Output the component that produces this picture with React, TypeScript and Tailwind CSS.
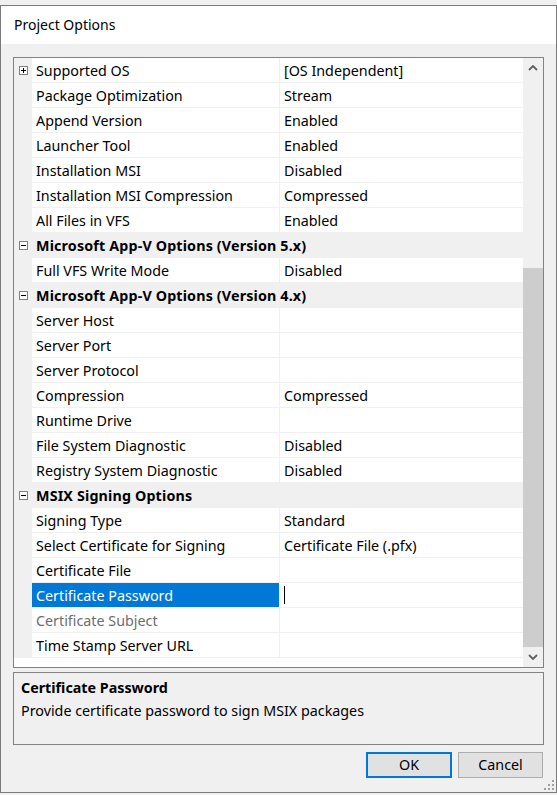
import React from "react";

type Row =
  | { kind: "cat"; label: string }
  | {
      kind: "prop";
      name: string;
      value?: string;
      expandable?: boolean;
      selected?: boolean;
      disabled?: boolean;
    };

const ROWS: Row[] = [
  { kind: "prop", name: "Supported OS", value: "[OS Independent]", expandable: true },
  { kind: "prop", name: "Package Optimization", value: "Stream" },
  { kind: "prop", name: "Append Version", value: "Enabled" },
  { kind: "prop", name: "Launcher Tool", value: "Enabled" },
  { kind: "prop", name: "Installation MSI", value: "Disabled" },
  { kind: "prop", name: "Installation MSI Compression", value: "Compressed" },
  { kind: "prop", name: "All Files in VFS", value: "Enabled" },
  { kind: "cat", label: "Microsoft App-V Options (Version 5.x)" },
  { kind: "prop", name: "Full VFS Write Mode", value: "Disabled" },
  { kind: "cat", label: "Microsoft App-V Options (Version 4.x)" },
  { kind: "prop", name: "Server Host" },
  { kind: "prop", name: "Server Port" },
  { kind: "prop", name: "Server Protocol" },
  { kind: "prop", name: "Compression", value: "Compressed" },
  { kind: "prop", name: "Runtime Drive" },
  { kind: "prop", name: "File System Diagnostic", value: "Disabled" },
  { kind: "prop", name: "Registry System Diagnostic", value: "Disabled" },
  { kind: "cat", label: "MSIX Signing Options" },
  { kind: "prop", name: "Signing Type", value: "Standard" },
  { kind: "prop", name: "Select Certificate for Signing", value: "Certificate File (.pfx)" },
  { kind: "prop", name: "Certificate File" },
  { kind: "prop", name: "Certificate Password", selected: true },
  { kind: "prop", name: "Certificate Subject", disabled: true },
  { kind: "prop", name: "Time Stamp Server URL" },
];

function ToggleBox({ plus }: { plus?: boolean }) {
  return (
    <svg width="9" height="9" viewBox="0 0 9 9" className="block">
      <rect x="0.5" y="0.5" width="8" height="8" fill="#fff" stroke="#808080" />
      <path d="M2 4.5h5" stroke="#000" />
      {plus && <path d="M4.5 2v5" stroke="#000" />}
    </svg>
  );
}

function Chevron({ down }: { down?: boolean }) {
  return (
    <svg width="10" height="6" viewBox="0 0 10 6" className="block">
      <path
        d={down ? "M1 1l4 4 4-4" : "M1 5l4-4 4 4"}
        fill="none"
        stroke="#606060"
        strokeWidth="1.8"
      />
    </svg>
  );
}

function GridRow({ row }: { row: Row }) {
  if (row.kind === "cat") {
    return (
      <div className="flex h-[25px] items-stretch bg-[#f0f0f0]">
        <div className="flex w-[18px] shrink-0 items-center justify-center">
          <ToggleBox />
        </div>
        <div className="flex items-center pl-[4px] pt-[2px] font-bold tracking-[0.15px] text-black">
          {row.label}
        </div>
      </div>
    );
  }
  return (
    <div className="flex h-[25px] items-stretch">
      <div className="flex w-[18px] shrink-0 items-center justify-center bg-[#f0f0f0]">
        {row.expandable && <ToggleBox plus />}
      </div>
      <div className="flex flex-1 border-b border-[#f0f0f0]">
        <div
          className={`flex w-[247px] shrink-0 items-center pl-[4px] pt-[2px] ${
            row.selected
              ? "bg-[#0078d7] text-white"
              : row.disabled
                ? "text-[#6d6d6d]"
                : "text-black"
          }`}
        >
          {row.name}
        </div>
        <div className="w-px shrink-0 bg-[#f0f0f0]" />
        <div className="flex flex-1 items-center pl-[4px] pt-[2px] text-black">
          {row.selected ? <span className="-mt-[2px] block h-[18px] w-px bg-black" /> : row.value}
        </div>
      </div>
    </div>
  );
}

export default function App() {
  return (
    <div
      className="h-[795px] w-[557px] bg-[#f0f0f0] pt-[5px] text-[14.3px] leading-none"
      style={{ fontFamily: '"Noto Sans", "Open Sans", sans-serif' }}
    >
      <div className="relative flex h-[788px] flex-col border border-[#7a7a7a] bg-[#f0f0f0]">
        {/* Title bar */}
        <div className="flex h-[38px] shrink-0 items-center bg-white pl-[13px] text-[14px] text-black">
          Project Options
        </div>

        <div className="flex flex-1 flex-col px-[12px] pt-[13px]">
          {/* Property grid */}
          <div className="flex h-[611px] border border-[#828282] bg-white">
            <div className="flex flex-1 flex-col">
              {ROWS.map((row, i) => (
                <GridRow key={i} row={row} />
              ))}
            </div>
            <div className="flex w-[20px] shrink-0 flex-col bg-[#f0f0f0]">
              <div className="flex h-[20px] items-center justify-center">
                <Chevron />
              </div>
              <div className="h-[190px]" />
              <div className="flex-1 bg-[#cdcdcd]" />
              <div className="flex h-[20px] items-center justify-center">
                <Chevron down />
              </div>
            </div>
          </div>

          {/* Description pane */}
          <div className="mt-[4px] flex h-[73px] flex-col border border-[#828282] bg-[#f0f0f0] px-[7px] pt-[8px] text-black">
            <div className="font-bold">Certificate Password</div>
            <div className="mt-[9px]">Provide certificate password to sign MSIX packages</div>
          </div>

          {/* Buttons */}
          <div className="mt-[7px] flex justify-end gap-[6px] pr-px">
            <button
              type="button"
              className="flex h-[26px] w-[86px] items-center justify-center border-2 border-[#0078d7] bg-[#e1e1e1] text-black"
            >
              OK
            </button>
            <button
              type="button"
              className="flex h-[26px] w-[85px] items-center justify-center border border-[#adadad] bg-[#e1e1e1] text-black"
            >
              Cancel
            </button>
          </div>
        </div>

        {/* Resize grip */}
        <svg
          width="10"
          height="10"
          viewBox="0 0 10 10"
          className="absolute bottom-[2px] right-[2px]"
        >
          <g fill="#a0a0a0">
            <rect x="8" y="0" width="2" height="2" />
            <rect x="4" y="4" width="2" height="2" />
            <rect x="8" y="4" width="2" height="2" />
            <rect x="0" y="8" width="2" height="2" />
            <rect x="4" y="8" width="2" height="2" />
            <rect x="8" y="8" width="2" height="2" />
          </g>
        </svg>
      </div>
    </div>
  );
}
